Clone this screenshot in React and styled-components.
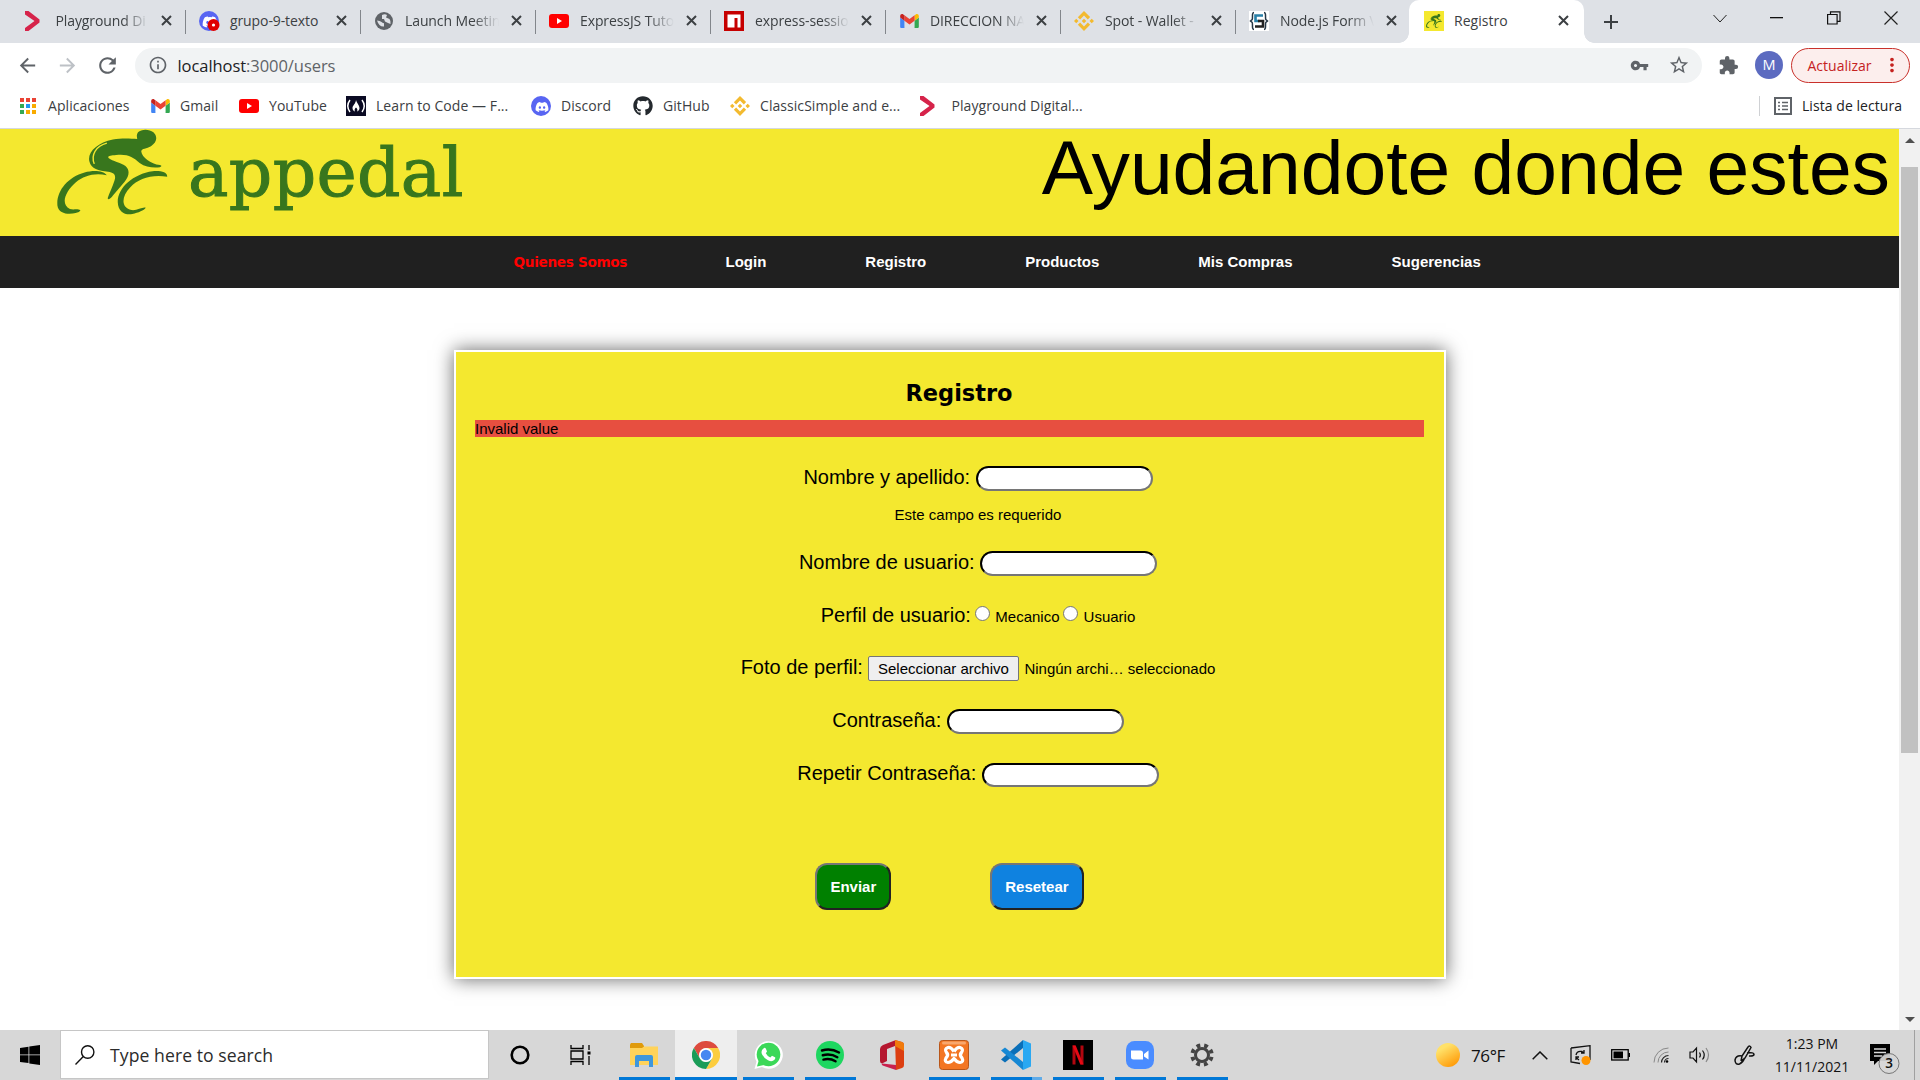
import React from "react";
import styled, { createGlobalStyle, css } from "styled-components";
import { FaDiscord, FaGithub } from "react-icons/fa";
import { SiBinance } from "react-icons/si";
import {
  MdVpnKey, MdStarBorder, MdExtension, MdInfoOutline, MdRefresh, MdArrowBack,
  MdArrowForward, MdPublic, MdMoreVert,
} from "react-icons/md";

const ui = `"Open Sans", "Noto Sans", sans-serif`;
const arial = `"Liberation Sans", Arial, sans-serif`;

const Global = createGlobalStyle`
  * { box-sizing: border-box; }
  body { margin: 0; background: #fff; overflow: hidden; }
  svg { display: block; flex: none; }
`;

const Screen = styled.div`
  width: 1920px;
  height: 1080px;
  display: flex;
  flex-direction: column;
  overflow: hidden;
  font-family: ${ui};
  color: #3c4043;
`;

/* ---------- browser chrome ---------- */

const TabStrip = styled.div`
  height: 43px;
  display: flex;
  background: #dee1e6;
  padding-left: 11px;
`;

const Tab = styled.div`
  width: 175px;
  height: 43px;
  display: flex;
  align-items: center;
  padding: 0 14px 2px ${(p) => p.$pad ?? 13}px;
  position: relative;
  ${(p) => p.$line && css`
    &::after {
      content: "";
      position: absolute;
      right: 0;
      top: 10px;
      width: 1px;
      height: 24px;
      background: #82868b;
    }
  `}
  ${(p) => p.$active && css`
    background: #fff;
    border-radius: 10px 10px 0 0;
    margin-left: -2px;
    padding-left: 15px;
    padding-right: 15px;
    &::before, &::after {
      content: "";
      position: absolute;
      bottom: 0;
      width: 10px;
      height: 10px;
    }
    &::before { left: -10px; background: radial-gradient(circle at 0 0, transparent 9.5px, #fff 10px); }
    &::after { right: -10px; background: radial-gradient(circle at 100% 0, transparent 9.5px, #fff 10px); }
  `}
`;

const Favicon = styled.span`
  width: 20px;
  height: 20px;
  margin-right: ${(p) => p.$gap ?? 10}px;
  flex: none;
  display: flex;
  align-items: center;
  justify-content: center;
`;

const TabTitle = styled.span`
  flex: 1;
  min-width: 0;
  white-space: nowrap;
  font-size: 14px;
  line-height: 20px;
  letter-spacing: ${(p) => p.$track ?? -0.1}px;
  margin-right: 12px;
  ${(p) => p.$fade && css`mask-image: linear-gradient(to right, #000 calc(100% - 26px), transparent 100%);`}
`;

const WindowButtons = styled.div`
  margin-left: auto;
  display: flex;
  height: 36px;
`;

const Cell = styled.span`
  width: ${(p) => p.$w}px;
  height: 100%;
  display: flex;
  flex: none;
  align-items: center;
  justify-content: center;
  color: ${(p) => p.$c || "#5f6368"};
`;

const Toolbar = styled.div`
  height: 44px;
  display: flex;
  align-items: center;
  padding: 0 10px 0 7px;
  background: #fff;
`;

const Omnibox = styled.div`
  width: 1567px;
  height: 35px;
  margin-left: 8px;
  border-radius: 18px;
  background: #f1f3f4;
  display: flex;
  align-items: center;
  padding: 0 3px 0 12.5px;
`;

const Url = styled.span`
  flex: 1;
  margin-left: 10px;
  font-size: 16.5px;
  letter-spacing: -0.06px;
  color: #5f6368;
  b { font-weight: 400; color: #202124; }
`;

const Avatar = styled.span`
  width: 28px;
  height: 28px;
  margin: 0 8px 0 1px;
  border-radius: 50%;
  background: #5c6bc0;
  color: #fff;
  font-size: 14.5px;
  line-height: 28px;
  text-align: center;
`;

const UpdatePill = styled.span`
  width: 119px;
  height: 35px;
  border: 1.5px solid #c9302a;
  border-radius: 18px;
  background: #fceeed;
  color: #c5221f;
  display: flex;
  align-items: center;
  justify-content: space-between;
  padding: 0 6px 0 15.5px;
  font-size: 14px;
  letter-spacing: 0;
`;

const Bookmarks = styled.div`
  height: 42px;
  display: flex;
  align-items: center;
  padding: 0 18px 4px;
  background: #fff;
  border-bottom: 1px solid #d5d8de;
`;

const Bookmark = styled.span`
  width: ${(p) => p.$w}px;
  display: flex;
  align-items: center;
  white-space: nowrap;
  font-size: 14px;
  letter-spacing: ${(p) => p.$track ?? 0.06}px;
`;

const ReadingList = styled(Bookmark)`
  margin-left: auto;
  border-left: 1px solid #cfd1d4;
  height: 20px;
  padding-left: 13px;
  color: #202124;
`;

/* ---------- page ---------- */

const Viewport = styled.div`
  height: 901px;
  display: flex;
  background: #fff;
  font-family: ${arial};
  color: #000;
`;

const Page = styled.div`
  width: 1899px;
  display: flex;
  flex-direction: column;
  align-items: center;
`;

const ScrollTrack = styled.div`
  width: 21px;
  background: #f1f1f1;
  display: flex;
  flex-direction: column;
  align-items: center;
  padding: 9px 0 8px;
`;

const ScrollThumb = styled.div`
  width: 17px;
  height: 586px;
  margin: 24px 0 auto;
  background: #c1c1c1;
`;

const Header = styled.header`
  width: 100%;
  height: 107px;
  padding: 0 9px 0 57px;
  display: flex;
  background: #f4e82f;
`;

const Brand = styled.span`
  margin-left: 20px;
  margin-top: -2px;
  font-family: "DejaVu Serif", serif;
  font-size: 68px;
  line-height: 92px;
  letter-spacing: 0.3px;
  color: #38761d;
  -webkit-text-stroke: 1px #38761d;
`;

const Slogan = styled.span`
  margin-left: auto;
  margin-top: -2px;
  font-size: 76.8px;
  line-height: 80px;
  white-space: nowrap;
`;

const Nav = styled.nav`
  width: 100%;
  height: 52px;
  background: #202020;
  display: flex;
  gap: 99px;
  padding: 0 0 1px 513.5px;
  align-items: center;
`;

const NavLink = styled.a`
  font-size: 15px;
  font-weight: 700;
  line-height: 18px;
  color: #fff;
  ${(p) => p.$current && css`
    color: #f00;
    font-family: "DejaVu Sans", Verdana, sans-serif;
    font-size: 13.6px;
    letter-spacing: -0.3px;
    width: 113px;
    white-space: nowrap;
  `}
`;

const Form = styled.form`
  width: 992px;
  height: 629px;
  margin-top: 62px;
  margin-left: 1px;
  border: 2px solid #fff;
  background: #f4e82f;
  box-shadow: 0 0 18px rgba(0, 0, 0, 0.6);
  padding: 26px 20px 0 19px;
`;

const Title = styled.h2`
  margin: 0;
  padding-left: 19px;
  text-align: center;
  font: 700 22.5px/30px "DejaVu Sans", Verdana, sans-serif;
`;

const ErrorBar = styled.div`
  margin-top: 12px;
  height: 17px;
  background: #e74f40;
  font-size: 15px;
  line-height: 17px;
`;

const Fields = styled.div`
  padding: 5px 0 0 57px;
`;

const Row = styled.div`
  height: ${(p) => p.$h ?? 25}px;
  margin-top: ${(p) => p.$top}px;
  display: flex;
  justify-content: center;
  align-items: flex-start;
`;

const Label = styled.label`
  font-size: 20px;
  line-height: ${(p) => p.$lh ?? 22}px;
  margin-right: ${(p) => p.$gap ?? 5.5}px;
`;

const Small = styled.span`
  font-size: 15px;
  line-height: 25px;
`;

const TextInput = styled.input`
  width: 177px;
  height: 100%;
  border: 2px inset #767676;
  border-color: #222 #767676 #767676 #222;
  border-radius: 12.5px;
  background: #fff;
  outline: none;
`;

const Radio = styled.span`
  width: 15px;
  height: 15px;
  margin: 2px 5.5px 0 ${(p) => p.$left ?? 0}px;
  border: 1px solid #767676;
  border-radius: 50%;
  background: #fff;
`;

const FileButton = styled.span`
  width: 151px;
  height: 25px;
  margin-right: 5.5px;
  border: 1px solid #767676;
  border-radius: 2px;
  background: #efefef;
  font-size: 15px;
  line-height: 23px;
  text-align: center;
`;

const Actions = styled.div`
  display: flex;
  justify-content: center;
  gap: 99px;
  margin-top: 76px;
`;

const Button = styled.button`
  height: 47px;
  padding: 0 13px;
  border: 2px solid;
  border-color: #767676 #222 #222 #767676;
  border-radius: 12px;
  background: ${(p) => p.$bg};
  color: #fff;
  font: 700 15px ${arial};
`;

/* ---------- taskbar ---------- */

const Taskbar = styled.div`
  height: 50px;
  display: flex;
  background: #d7d7d7;
  color: #111;
`;

const Search = styled.div`
  width: 429px;
  height: 49px;
  border: 1px solid #c6c6c6;
  background: #fff;
  display: flex;
  align-items: center;
  gap: 15px;
  padding-left: 14px;
  font-size: 17.6px;
  letter-spacing: 0.07px;
  color: #2b2b2b;
`;

const TaskButton = styled.span`
  width: 62px;
  height: 50px;
  display: grid;
  grid-template-rows: 50px 3px;
  place-items: center;
  background: ${(p) => (p.$active ? "#eee" : "none")};
`;

const Underline = styled.span`
  width: ${(p) => (p.$active ? 62 : 51)}px;
  height: 3px;
  margin-top: -6px;
  background: ${(p) => (p.$multi ? "linear-gradient(to right, #0078d7 41px, #5fabe8 41px)" : "#0078d7")};
`;

const Tray = styled.div`
  margin-left: auto;
  display: flex;
  align-items: center;
`;

const Temp = styled.span`
  width: 49px;
  font-size: 17px;
  letter-spacing: -0.4px;
  white-space: nowrap;
`;

const Clock = styled.span`
  width: 86px;
  margin-top: -1px;
  font-size: 14px;
  line-height: 23px;
  text-align: center;
`;

const ShowDesktop = styled.span`
  width: 6px;
  height: 50px;
  border-left: 1px solid #a0a0a0;
`;

/* ---------- drawings ---------- */

const CloseX = () => (
  <svg width="11" height="11" viewBox="0 0 11 11" stroke="#3c4043" strokeWidth="2"><path d="M1 1l9 9M10 1l-9 9" /></svg>
);
const Arrow = () => (
  <svg width="16" height="20" viewBox="0 0 16 20"><path d="M1 0h3.500L15.500 8.500v3L4.500 20H1V17L10.500 10 1 3.500z" fill="#d6234a" /></svg>
);
const Gmail = () => (
  <svg width="19" height="14" viewBox="52 42 88 66">
    <path fill="#4285f4" d="M58 108h14V74L52 59v43c0 3.32 2.69 6 6 6" />
    <path fill="#34a853" d="M120 108h14c3.32 0 6-2.69 6-6V59l-20 15" />
    <path fill="#fbbc04" d="M120 48v26l20-15v-8c0-7.42-8.47-11.65-14.4-7.2" />
    <path fill="#ea4335" d="M72 74V48l24 18 24-18v26L96 92" />
    <path fill="#c5221f" d="M52 51v8l20 15V48l-5.6-4.2c-5.94-4.45-14.4-.22-14.4 7.2" />
  </svg>
);
const YouTube = () => (
  <svg width="20" height="14" viewBox="0 0 20 14"><rect width="20" height="14" rx="3" fill="red" /><path d="M8 4l5 3-5 3z" fill="#fff" /></svg>
);
const DiscordDisc = () => (
  <svg width="20" height="20" viewBox="0 0 20 20"><circle cx="10" cy="10" r="10" fill="#5865f2" /><FaDiscord x="4" y="4" width="12" height="12" color="#fff" /></svg>
);
const DiscordAlert = () => (
  <svg width="21" height="20" viewBox="0 0 21 20"><circle cx="10" cy="10" r="10" fill="#5865f2" /><FaDiscord x="3" y="3" width="13" height="13" color="#fff" /><circle cx="14.5" cy="14" r="6" fill="#e00000" /><circle cx="14.5" cy="14" r="1.6" fill="#fff" /></svg>
);
const Npm = () => (
  <svg width="20" height="20" viewBox="0 0 20 20"><path d="M0 0h20v20H0z" fill="#c60000" /><path d="M3.5 3.5h13v13h-3v-9.5h-3v9.5h-7z" fill="#fff" /></svg>
);
const Globe = () => (
  <svg width="20" height="20" viewBox="0 0 20 20"><circle cx="10" cy="10" r="9" fill="#5f6368" /><path d="M3 9.500q3 0 4.500 1.500t2.500 1v3.500q-5 .5-7-6zM8 4q3-1.500 5 0l-1 2.500 3.500 1.500q1.500 2 1 5l-2.500-1-3-1.500-1-2.500H8z" fill="#dee1e6" /></svg>
);
const Binance = () => <SiBinance size={20} color="#f3ba2f" />;
const NodeS = () => (
  <svg width="20" height="20" viewBox="0 0 20 20">
    <rect width="20" height="20" fill="#fff" />
    <path d="M5 1.5C2.5 1.5 4 7 3.2 8.500L1.500 10l1.700 1.500C4 13 2.500 18.500 5 18.500M15 1.500c2.500 0 1 5.500 1.800 7L18.500 10l-1.700 1.500c-.8 1.500.7 7-1.800 7" fill="none" stroke="#253746" strokeWidth="1.500" />
    <path d="M14 4.500H6.500v5.500h4" fill="none" stroke="#2980a8" strokeWidth="2.600" />
    <path d="M9 10h5v5.500H6" fill="none" stroke="#222" strokeWidth="2.600" />
  </svg>
);
const Fcc = () => (
  <svg width="20" height="20" viewBox="0 0 20 20"><rect width="20" height="20" fill="#0a0a23" /><path d="M4 4c-3 4-3 8 0 12M16 4c3 4 3 8 0 12" fill="none" stroke="#fff" strokeWidth="1.500" /><path d="M10 4c.5 3 3.500 5 3.500 8 0 2-1 3-2.500 3.500 1-2 0-3-1-4-1 1-2 2-1 4C7.500 15 6.500 14 6.500 12c0-2.500 3-4 3.500-8z" fill="#fff" /></svg>
);
const AppsGrid = () => {
  const colors = ["#ea4335", "#ea4335", "#ea4335", "#34a853", "#2196f3", "#f9ab00", "#34a853", "#f9ab00", "#f9ab00"];
  return (
    <svg width="18" height="18" viewBox="0 0 18 18">
      {colors.map((c, i) => <rect key={i} x={1 + (i % 3) * 6} y={1 + Math.floor(i / 3) * 6} width="4" height="4" fill={c} />)}
    </svg>
  );
};
const Cyclist = ({ width, height, line = "#f4e82f" }) => (
  <svg width={width} height={height} viewBox="139 26 274 261" preserveAspectRatio="none" fill="#38761d">
    <path d="M337 56C320 55 298 53 277 58C238 68 213 97 219 125C223 148 242 152 265 156C281 159 285 166 281 182C276 202 268 220 264 236C266 243 272 237 277 228L306 186C318 168 319 150 308 138C296 128 276 124 267 115C262 108 270 107 285 105C313 101 327 111 343 129C358 142 375 144 393 142C398 139 398 137 393 135C370 132 349 112 347 94C347 84 361 86 371 78C386 66 388 49 377 36C366 25 347 26 339 36C335 43 336 50 337 56Z" />
    <path d="M262 69C235 78 222 104 231 132" fill="none" stroke={line} strokeWidth="3.500" />
    <path d="M262 166C253 152 229 150 207 158C165 172 137 215 140 258C143 286 170 285 185 281Q195 278 197 273C190 267 181 272 171 269C147 254 159 216 185 188C206 167 231 158 262 166Z" />
    <path d="M411 171C412 158 397 152 375 154C327 162 288 205 289 248C290 278 307 288 325 284C340 280 354 273 358 265C350 262 337 274 323 272C297 264 297 232 320 203C339 177 373 163 411 171Z" />
  </svg>
);
const Chrome = () => (
  <svg width="28" height="28" viewBox="0 0 48 48">
    <path d="M3.200 12A24 24 0 0 1 44.800 12H24A12 12 0 0 0 13.600 30z" fill="#dd4b3e" />
    <path d="M44.800 12A24 24 0 0 1 24 48L34.400 30A12 12 0 0 0 24 12z" fill="#fccd3f" />
    <path d="M24 48A24 24 0 0 1 3.200 12L13.600 30A12 12 0 0 0 34.400 30z" fill="#1a9c57" />
    <circle cx="24" cy="24" r="11.500" fill="#fff" /><circle cx="24" cy="24" r="9" fill="#4688f1" />
  </svg>
);
const Explorer = () => (
  <svg width="28" height="24" viewBox="0 0 28 24"><path d="M0 1.500L1 0h11l2 3v3H0z" fill="#e09b0c" /><path d="M0 5h12l2-1.500h14V22H0z" fill="#ffd35a" /><path d="M5 24V14q0-2 2-2h14q2 0 2 2v10h-4v-6h-10v6z" fill="#3f97dc" /></svg>
);
const Office = () => (
  <svg width="24" height="30" viewBox="0 0 24 30"><path d="M16 0L3 5Q0 6.500 0 9v12q0 2 2 2.500L7 21V9l8-3z" fill="#b5172f" /><path d="M15 0l7 2q2 .5 2 3v20q0 2.500-2 3l-6 2z" fill="#dc3e10" /><path d="M15 0l7 2q2 .5 2 3v6l-9-5z" fill="#f17a0b" /><path d="M2 23.500L16 25v5L4 26q-3-1-2-2.500z" fill="#c9214d" /></svg>
);
const Xampp = () => (
  <svg width="30" height="30" viewBox="0 0 30 30"><rect x=".5" y=".5" width="29" height="29" rx="3" fill="#f37623" stroke="#b8561a" /><rect x="3" y="1.500" width="24" height="3" rx="1.500" fill="#f9a76d" /><path d="M15 11.500Q12 7 9 7.500Q5 9 7.500 12.500Q10 15 7 18Q5 22 9 22.500Q12 22.500 15 18.500Q18 22.500 21 22.500Q25 22 23 18Q20 15 22.500 12.500Q25 9 21 7.500Q18 7 15 11.500M12 15h6" fill="none" stroke="#fff" strokeWidth="3.200" strokeLinejoin="round" /></svg>
);
const Netflix = () => (
  <svg width="30" height="30" viewBox="0 0 30 30"><rect width="30" height="30" fill="#000" /><path d="M9.500 5.500h3v19h-3zM17.500 5.500h3v19h-3z" fill="#b1060f" /><path d="M9.500 5.500h3.200l7.800 19h-3.200z" fill="#e50914" /></svg>
);
const Zoom = () => (
  <svg width="28" height="28" viewBox="0 0 28 28"><rect width="28" height="28" rx="8.500" fill="#4a8cff" /><path d="M5 9.500h9.500q2.500 0 2.500 2.500v6.500H7.500Q5 18.500 5 16zM18 13l4.500-3.500v9L18 15.500z" fill="#fff" /></svg>
);
const WhatsApp = () => (
  <svg width="30" height="30" viewBox="0 0 30 30"><path d="M1.500 29L3.500 21.500A14 13.800 0 1 1 9 27z" fill="#fff" /><circle cx="15.500" cy="14.500" r="11.800" fill="#3bd858" /><path d="M4 26.500l2-7 5 5.500z" fill="#3bd858" /><path d="M10.500 8.500q1.500-1.500 2.500.5l1 2.500-1.200 1.800q1.500 3 4.500 4.200l1.700-1.700 3 1.500q.8.500-.5 2.500-2.500 2.500-6.500.5-4-2-6-6-1.500-4 1.500-5.800z" fill="#fff" /></svg>
);
const Spotify = () => (
  <svg width="28" height="28" viewBox="0 0 28 28"><circle cx="14" cy="14" r="14" fill="#1ed760" /><path d="M6 9.500q9-2.500 17 2M6.800 14.200q8-2 14.500 2M7.500 18.600q6.500-1.600 12 1.700" fill="none" stroke="#000" strokeWidth="2.500" strokeLinecap="round" /></svg>
);
const VsCode = () => (
  <svg width="30" height="30" viewBox="0 0 30 30"><path d="M22 0v8L4 22.500 0 19.500z" fill="#0a6fb8" /><path d="M22 30v-8L4 7.500 0 10.500z" fill="#1688d4" /><path d="M22 0l8 3.500v23L22 30z" fill="#2aa8f2" /></svg>
);
const Gear = () => (
  <svg width="24" height="24" viewBox="0 0 24 24"><circle cx="12" cy="12" r="9.700" fill="none" stroke="#444" strokeWidth="4" strokeDasharray="3.800 3.818" transform="rotate(11 12 12)" /><circle cx="12" cy="12" r="6.500" fill="#d7d7d7" stroke="#444" strokeWidth="3" /></svg>
);
const Cortana = () => (
  <svg width="20" height="20"><circle cx="10" cy="10" r="8.300" fill="none" stroke="#000" strokeWidth="2.600" /></svg>
);
const TaskView = () => (
  <svg width="24" height="20" viewBox="0 0 24 20" fill="none" stroke="#000" strokeWidth="1.300"><path d="M1 0v3.500h12V0M1 6h12v8H1zM1 20v-3.500h12V20M19 0v5M19 11v9" /><rect x="17.500" y="6.500" width="3" height="3" fill="#000" stroke="none" /></svg>
);

const TABS = [
  ["Playground Di", <Arrow />],
  ["grupo-9-texto", <DiscordAlert />],
  ["Launch Meetin", <Globe />],
  ["ExpressJS Tuto", <YouTube />],
  ["express-sessio", <Npm />],
  ["DIRECCION NA", <Gmail />],
  ["Spot - Wallet -", <Binance />],
  ["Node.js Form V", <NodeS />],
];

const BOOKMARKS = [
  ["Aplicaciones", <AppsGrid />, 132],
  ["Gmail", <Gmail />, 89],
  ["YouTube", <YouTube />, 107],
  ["Learn to Code — F...", <Fcc />, 185],
  ["Discord", <DiscordDisc />, 102],
  ["GitHub", <FaGithub size={20} color="#24292e" />, 97],
  ["ClassicSimple and e...", <Binance />, 187],
  ["Playground Digital...", <Arrow />, 180, 14.500],
];

const APPS = [
  { icon: <Cortana /> },
  { icon: <TaskView /> },
  { icon: <Explorer />, open: true },
  { icon: <Chrome />, open: true, active: true },
  { icon: <WhatsApp />, open: true },
  { icon: <Spotify />, open: true },
  { icon: <Office /> },
  { icon: <Xampp />, open: true },
  { icon: <VsCode />, open: true, multi: true },
  { icon: <Netflix />, open: true },
  { icon: <Zoom />, open: true },
  { icon: <Gear />, open: true },
];

export default function App() {
  return (
    <Screen>
      <Global />
      <TabStrip>
        {TABS.map(([name, icon], i) => (
          <Tab key={name} $line={i < 7} $pad={i === 0 ? 11 : 13}>
            <Favicon $gap={i === 0 ? 13.500 : 11}>{icon}</Favicon>
            <TabTitle $fade={i !== 1}>{name}</TabTitle>
            <CloseX />
          </Tab>
        ))}
        <Tab $active>
          <Favicon $gap={10}><svg width="20" height="20"><rect width="20" height="20" fill="#f4e82f" /><svg x="2" y="3"><Cyclist width={16} height={14} /></svg></svg></Favicon>
          <TabTitle $track={0.05}>Registro</TabTitle>
          <CloseX />
        </Tab>
        <Cell $w={54}><svg width="16" height="16" stroke="#3c4043" strokeWidth="2"><path d="M8 1v14M1 8h14" /></svg></Cell>
        <WindowButtons>
          <Cell $w={57}><svg width="14" height="9" fill="none" stroke="#222"><path d="M.5 1l6.500 7 6.500-7" /></svg></Cell>
          <Cell $w={57}><svg width="13" height="2"><rect width="13" height="1.300" fill="#111" /></svg></Cell>
          <Cell $w={57}><svg width="14" height="14" fill="none" stroke="#111" strokeWidth="1.200"><path d="M.6 3.500h9.500v9.500H.6zM3.500 3.500V.8h9.500v9.500h-2.800" /></svg></Cell>
          <Cell $w={58}><svg width="14" height="14" stroke="#222" strokeWidth="1.200"><path d="M.5.5l13 13M13.500.5l-13 13" /></svg></Cell>
        </WindowButtons>
      </TabStrip>

      <Toolbar>
        <Cell $w={40}><MdArrowBack size={23} /></Cell>
        <Cell $w={40} $c="#bdc1c6"><MdArrowForward size={23} /></Cell>
        <Cell $w={40}><MdRefresh size={25} /></Cell>
        <Omnibox>
          <MdInfoOutline size={20} color="#5f6368" />
          <Url><b>localhost</b>:3000/users</Url>
          <Cell $w={40}><MdVpnKey size={19} /></Cell>
          <Cell $w={40}><MdStarBorder size={22} /></Cell>
        </Omnibox>
        <Cell $w={52}><MdExtension size={21} /></Cell>
        <Avatar>M</Avatar>
        <UpdatePill>Actualizar<MdMoreVert size={22} /></UpdatePill>
      </Toolbar>

      <Bookmarks>
        {BOOKMARKS.map(([name, icon, w, gap]) => (
          <Bookmark key={name} $w={w}><Favicon $gap={gap}>{icon}</Favicon>{name}</Bookmark>
        ))}
        <ReadingList $w={143}>
          <Favicon $gap={9}>
            <svg width="18" height="18" viewBox="0 0 18 18" fill="none" stroke="#5f6368" strokeWidth="2"><rect x="1" y="1" width="16" height="16" /><path d="M4 5.500h2M8 5.500h6M4 9h2M8 9h6M4 12.500h2M8 12.500h6" strokeWidth="1.500" /></svg>
          </Favicon>
          Lista de lectura
        </ReadingList>
      </Bookmarks>

      <Viewport>
        <Page>
          <Header>
            <Cyclist width={111} height={86} />
            <Brand>appedal</Brand>
            <Slogan>Ayudandote donde estes</Slogan>
          </Header>
          <Nav>
            <NavLink $current>Quienes Somos</NavLink>
            <NavLink>Login</NavLink>
            <NavLink>Registro</NavLink>
            <NavLink>Productos</NavLink>
            <NavLink>Mis Compras</NavLink>
            <NavLink>Sugerencias</NavLink>
          </Nav>
          <Form>
            <Title>Registro</Title>
            <ErrorBar>Invalid value</ErrorBar>
            <Fields>
              <Row $top={24}><Label>Nombre y apellido:</Label><TextInput /></Row>
              <Row $top={11}><Small>Este campo es requerido</Small></Row>
              <Row $top={24}><Label>Nombre de usuario:</Label><TextInput /></Row>
              <Row $top={28}>
                <Label $gap={4}>Perfil de usuario:</Label>
                <Radio /><Small>Mecanico</Small>
                <Radio $left={3.500} /><Small>Usuario</Small>
              </Row>
              <Row $top={27}>
                <Label $gap={5}>Foto de perfil:</Label>
                <FileButton>Seleccionar archivo</FileButton>
                <Small>Ningún archi… seleccionado</Small>
              </Row>
              <Row $top={28}><Label>Contraseña:</Label><TextInput type="password" /></Row>
              <Row $top={28.500} $h={24.500}><Label $lh={20}>Repetir Contraseña:</Label><TextInput type="password" /></Row>
            </Fields>
            <Actions>
              <Button type="button" $bg="#008000">Enviar</Button>
              <Button type="button" $bg="#0f82e0">Resetear</Button>
            </Actions>
          </Form>
        </Page>
        <ScrollTrack>
          <svg width="10" height="5"><path d="M0 5l5-5 5 5z" fill="#505050" /></svg>
          <ScrollThumb />
          <svg width="10" height="5"><path d="M0 0l5 5 5-5z" fill="#505050" /></svg>
        </ScrollTrack>
      </Viewport>

      <Taskbar>
        <Cell $w={60}>
          <svg width="20" height="20" viewBox="0 0 20 20" fill="#000"><path d="M0 3l8.500-1.300v7.800H0zM9.300 1.500L20 0v9.500H9.300zM0 10.300h8.500v7.800L0 17zM9.300 10.300H20V20L9.300 18.400z" /></svg>
        </Cell>
        <Search>
          <svg width="20" height="20" viewBox="0 0 20 20" fill="none" stroke="#111" strokeWidth="1.400"><circle cx="12.700" cy="7" r="6.200" /><path d="M8.300 11.500L.5 19.500" /></svg>
          Type here to search
        </Search>
        {APPS.map((app, i) => (
          <TaskButton key={i} $active={app.active}>
            {app.icon}
            {app.open && <Underline $active={app.active} $multi={app.multi} />}
          </TaskButton>
        ))}
        <Tray>
          <Cell $w={46}>
            <svg width="24" height="24"><defs><linearGradient id="sun" x1=".2" y1="0" x2=".8" y2="1"><stop offset=".2" stopColor="#ffe169" /><stop offset="1" stopColor="#ff9500" /></linearGradient></defs><circle cx="12" cy="12" r="12" fill="url(#sun)" /></svg>
          </Cell>
          <Temp>76°F</Temp>
          <Cell $w={40}><svg width="16" height="9" fill="none" stroke="#111" strokeWidth="1.500"><path d="M.7 8.300L8 1l7.300 7.300" /></svg></Cell>
          <Cell $w={40}>
            <svg width="21" height="20" viewBox="0 0 21 20" fill="none" stroke="#111" strokeWidth="1.300"><path d="M1 3l19-2.300V15M1 3v14l9 1.500M6 10q1-4.500 6-3.500l2 1.500M14 5v3h-3M6 15v-3h3M6 12.500l3 2.500" /><circle cx="16" cy="15.500" r="4.500" fill="#ff9500" stroke="none" /></svg>
          </Cell>
          <Cell $w={41}>
            <svg width="20" height="12"><rect x=".7" y=".7" width="16.500" height="10.300" fill="none" stroke="#000" strokeWidth="1.300" /><rect x="2.500" y="2.500" width="9.500" height="6.800" /><rect x="17.500" y="4" width="1.500" height="4" /></svg>
          </Cell>
          <Cell $w={39}>
            <svg width="16" height="16" fill="none" stroke="#888"><path d="M1 15.500A14.500 14.500 0 0 1 15.500 1M5 15.500A10.500 10.500 0 0 1 15.500 5" /><path d="M8.500 15.500a7 7 0 0 1 7-7M11.500 15.500a4 4 0 0 1 4-4" stroke="#222" strokeWidth="1.200" /><circle cx="14" cy="14.500" r="1.300" fill="#000" stroke="none" /></svg>
          </Cell>
          <Cell $w={39}>
            <svg width="21" height="18" viewBox="0 0 21 18" fill="none" stroke="#111" strokeWidth="1.200"><path d="M1 6h3l3.500-4v14L4 12H1zM10.500 6.500q1.800 2.500 0 5M13.500 4.500q3.500 4.500 0 9" /><path d="M17 2q5 7 0 14" stroke="#888" /></svg>
          </Cell>
          <Cell $w={50}>
            <svg width="21" height="21" viewBox="0 0 21 21" fill="none" stroke="#111" strokeWidth="1.500"><path d="M7 16L8 11 14 2q2-2 3 .5L11 13 7 16M8 11q-6-1-7 4 0 5 4.500 4 4-2 5-6M13 8q7-1 7 1.500-.5 2-5 1.500" /></svg>
          </Cell>
          <Clock>1:23 PM<br />11/11/2021</Clock>
          <Cell $w={59}>
            <svg width="32" height="23" viewBox="0 0 32 23" overflow="visible"><path d="M1 0h20v17H9l-4 4v-4H1z" fill="#000" /><path d="M5 5h12M5 8.500h12M5 12h8" stroke="#d7d7d7" strokeWidth="1.300" /><circle cx="20" cy="19.500" r="10" fill="#d7d7d7" fillOpacity=".92" stroke="#777" /><text x="20" y="24" fontSize="13.500" fontWeight="600" fontFamily="Open Sans, sans-serif" textAnchor="middle" fill="#111">3</text></svg>
          </Cell>
          <ShowDesktop />
        </Tray>
      </Taskbar>
    </Screen>
  );
}
